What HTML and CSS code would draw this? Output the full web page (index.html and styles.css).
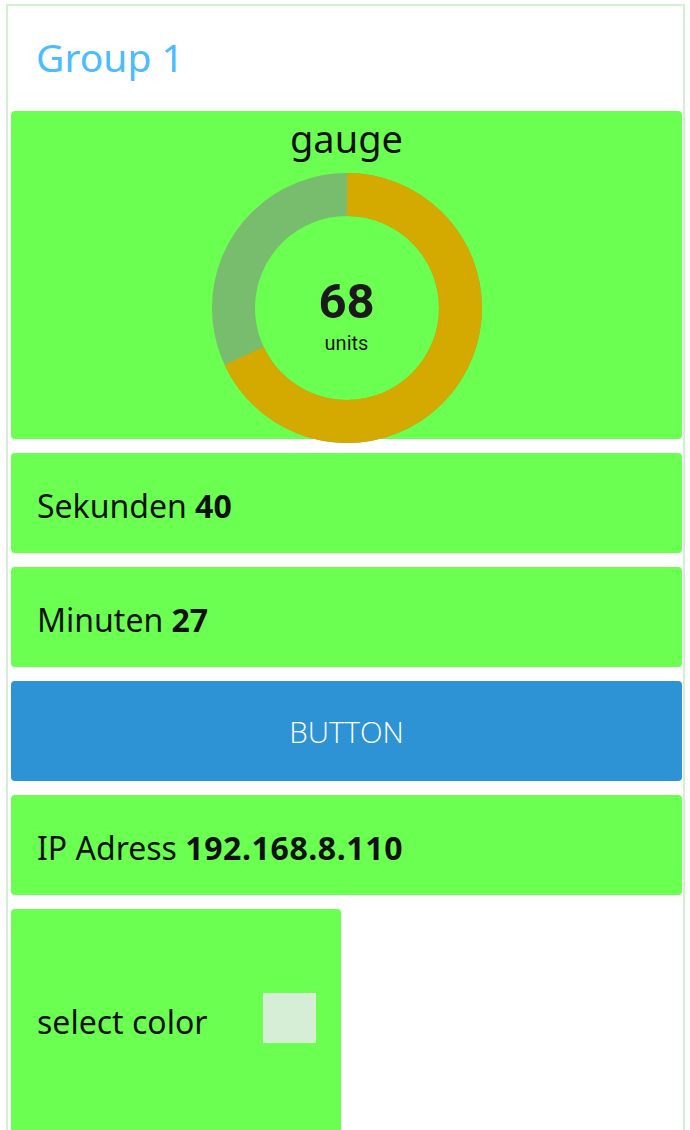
FILE: index.html
```html
<!DOCTYPE html>
<html>
<head>
<meta charset="utf-8">
<link rel="stylesheet" href="styles.css">
</head>
<body>
<div class="group">
  <h1 class="group-title">Group 1</h1>
  <div class="cards">
    <div class="card gauge-card">
      <div class="gauge-title">gauge</div>
      <div class="gauge">
        <svg class="donut" width="270" height="270" viewBox="0 0 270 270">
          <circle cx="135" cy="135" r="113.5" fill="none" stroke="#77bd6d" stroke-width="43"/>
          <circle cx="135" cy="135" r="113.5" fill="none" stroke="#d4a900" stroke-width="43"
            stroke-dasharray="484.94 228.2" transform="rotate(-90 135 135)"/>
        </svg>
        <div class="gauge-value">
          <div class="gauge-number">68</div>
          <div class="gauge-unit">units</div>
        </div>
      </div>
    </div>
    <div class="card text-card">Sekunden <b>40</b></div>
    <div class="card text-card">Minuten <b>27</b></div>
    <button class="card btn">BUTTON</button>
    <div class="card text-card">IP Adress <b class="wide">192.168.8.110</b></div>
    <div class="card color-card">
      <span>select color</span>
      <span class="swatch"></span>
    </div>
  </div>
</div>
</body>
</html>
```

FILE: styles.css
```css
html, body {
  margin: 0;
  padding: 0;
  background: #ffffff;
}
body {
  font-family: "Noto Sans", "Open Sans", sans-serif;
  color: #111;
  overflow: hidden;
}
.group {
  margin: 4px 0 0 6px;
  width: 671px;
  border: 2px solid #d4efd4;
  border-bottom: none;
  padding: 0 1px 0 3px;
  height: 1130px;
  box-sizing: content-box;
}
.group-title {
  margin: 0;
  height: 105px;
  padding: 31px 0 0 25px;
  box-sizing: border-box;
  font-weight: normal;
  font-size: 39px;
  line-height: 1;
  color: #4bbcff;
}
.cards {
  display: flex;
  flex-direction: column;
  gap: 14px;
  align-items: flex-start;
}
.card {
  background: #6bff52;
  border-radius: 4px;
  width: 671px;
  box-sizing: border-box;
  flex-shrink: 0;
}
.gauge-card {
  height: 328px;
  display: flex;
  flex-direction: column;
  align-items: center;
}
.gauge-title {
  font-size: 38px;
  line-height: 1;
  margin-top: 8px;
  height: 54px;
  flex-shrink: 0;
}
.gauge {
  position: relative;
  width: 270px;
  height: 270px;
  flex-shrink: 0;
}
.donut {
  display: block;
}
.gauge-value {
  position: absolute;
  inset: 0;
  display: flex;
  flex-direction: column;
  align-items: center;
  justify-content: center;
  font-family: Roboto, "Liberation Sans", sans-serif;
  color: #1a1a1a;
}
.gauge-number {
  font-size: 49px;
  font-weight: bold;
  line-height: 1;
  margin-top: 13px;
}
.gauge-unit {
  font-size: 20px;
  line-height: 1;
  margin-top: 7px;
}
.text-card {
  height: 100px;
  display: flex;
  align-items: center;
  padding: 4px 0 0 26px;
  font-size: 32px;
  white-space: pre;
}
.text-card .wide {
  letter-spacing: 0.6px;
}
.btn {
  height: 100px;
  border: none;
  background: #2d93d4;
  color: #ffffff;
  font-family: "Open Sans", "Noto Sans", sans-serif;
  font-size: 29.5px;
  font-weight: 300;
  padding: 0;
}
.color-card {
  width: 330px;
  height: 224px;
  display: flex;
  align-items: center;
  justify-content: space-between;
  padding: 0 25px 0 26px;
  font-size: 32px;
  border-radius: 4px 4px 0 0;
}
.swatch {
  display: block;
  width: 53px;
  height: 50px;
  background: #d7eed6;
  margin-top: -6px;
}
```
